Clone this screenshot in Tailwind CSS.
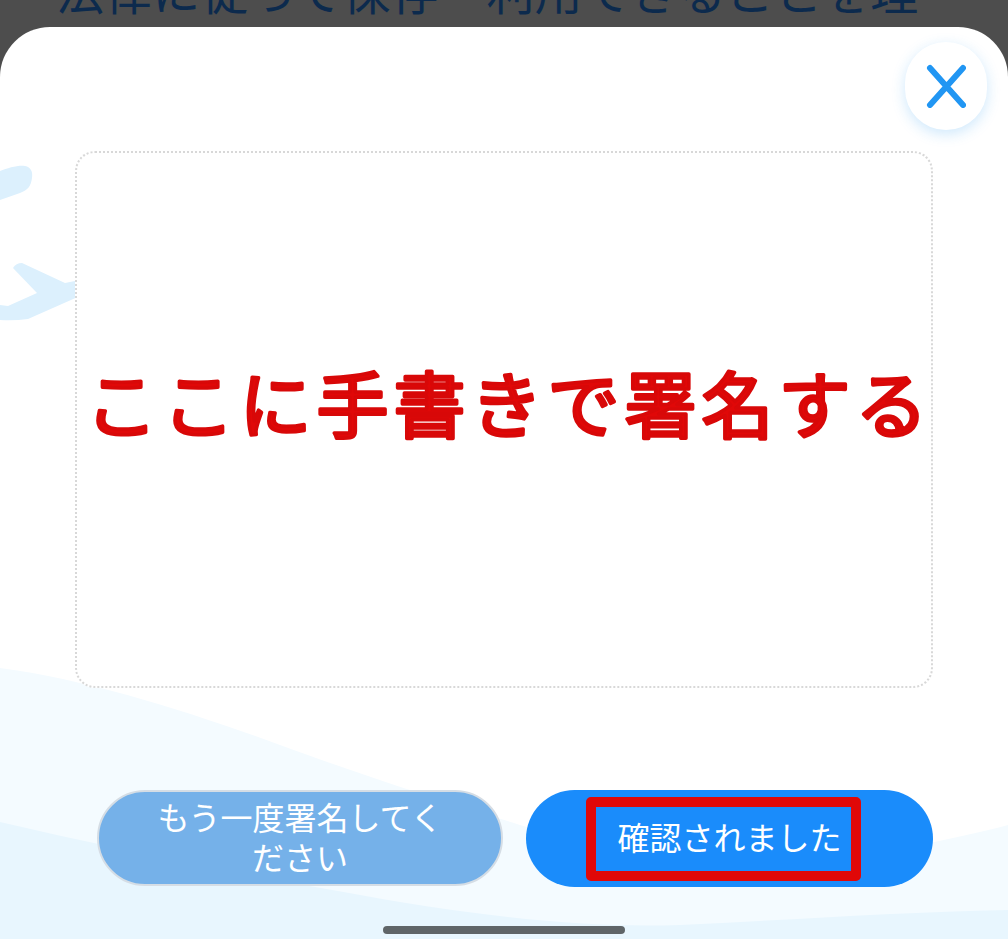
<!DOCTYPE html>
<html lang="ja">
<head>
<meta charset="utf-8">
<script src="https://cdn.jsdelivr.net/npm/@tailwindcss/browser@4"></script>
</head>
<body class="m-0 bg-[#4d4d4d] font-['Noto_Sans_CJK_JP','Noto_Sans',sans-serif]">
<div class="relative flex h-[939px] w-[1008px] flex-col overflow-hidden bg-[#4d4d4d]">
  <div class="h-[27px] shrink-0 overflow-hidden pl-[56px]">
    <p class="-mt-[39px] whitespace-nowrap text-[48px] leading-[56px] tracking-[0.1px] text-[#0c2a4d]">法律に従って保存・利用できることを理</p>
  </div>
  <div class="relative flex flex-1 flex-col overflow-hidden rounded-t-[50px] bg-white">
    <svg class="absolute inset-0 h-full w-full" viewBox="0 27 1008 912" fill="none">
      <path d="M0 668C90 680 190 712 280 745C370 778 440 800 520 825C640 862 760 880 840 862C900 848 960 838 1008 825V939H0Z" fill="#f4fbff"/>
      <path d="M0 822C120 850 270 880 400 902C500 918 590 928 680 925C790 920 900 912 1008 910V939H0Z" fill="#e8f6fe"/>
      <path d="M0 171C8 168 18 165 25 166C31 167 33 172 32 178C31 186 28 190 20 193L0 200Z" fill="#dcf0fd"/>
      <path d="M0 305L8 306L37 293L13 268Q16 263 22 263L65 283L80 280V296L28 319Q14 321 0 320Z" fill="#dcf0fd"/>
    </svg>
    <button class="absolute right-[21px] top-[15px] z-10 flex h-[88px] w-[82px] items-center justify-center rounded-full bg-white shadow-[0_4px_14px_rgba(33,150,243,0.22)]">
      <svg class="h-[44px] w-[40px]" viewBox="0 0 40 44" fill="none">
        <path d="M4 4L37 41M37 4L4 41" stroke="#2196f3" stroke-width="6" stroke-linecap="round"/>
      </svg>
    </button>
    <div class="relative mx-[75px] mt-[124px] h-[537px] shrink-0 rounded-[20px] border-2 border-dotted border-[#d8d8d8] bg-white">
      <svg class="absolute left-[-75px] top-[-124px] h-[400px] w-[1008px] overflow-visible" viewBox="0 0 1008 400">
        <text x="507" y="403" text-anchor="middle" font-size="72" font-weight="400" letter-spacing="5" fill="#e00808" stroke="#d80808" stroke-width="3.5" stroke-linejoin="round" stroke-linecap="round">ここに手書きで署名する</text>
      </svg>
    </div>
    <div class="relative mt-[102px] flex shrink-0 gap-[23px] pl-[97px]">
      <button class="flex h-[96px] w-[406px] items-center justify-center rounded-full border-2 border-[#d5dde5] bg-[#75b1e9] px-[50px] pb-[4px] text-center text-[32px] font-normal leading-[40px] text-white">もう一度署名してください</button>
      <div class="relative flex h-[97px] w-[407px] items-center justify-center rounded-full bg-[#1a8cfb] pb-[5px] text-[32px] font-normal text-white">
        <span>確認されました</span>
        <div class="absolute left-[60px] top-[7px] h-[84px] w-[275px] rounded-[5px] border-[10px] border-[#e00808]"></div>
      </div>
    </div>
    <div class="relative mx-auto mt-[39px] h-[8px] w-[242px] shrink-0 rounded-full bg-[#5f6568]"></div>
  </div>
</div>
</body>
</html>
